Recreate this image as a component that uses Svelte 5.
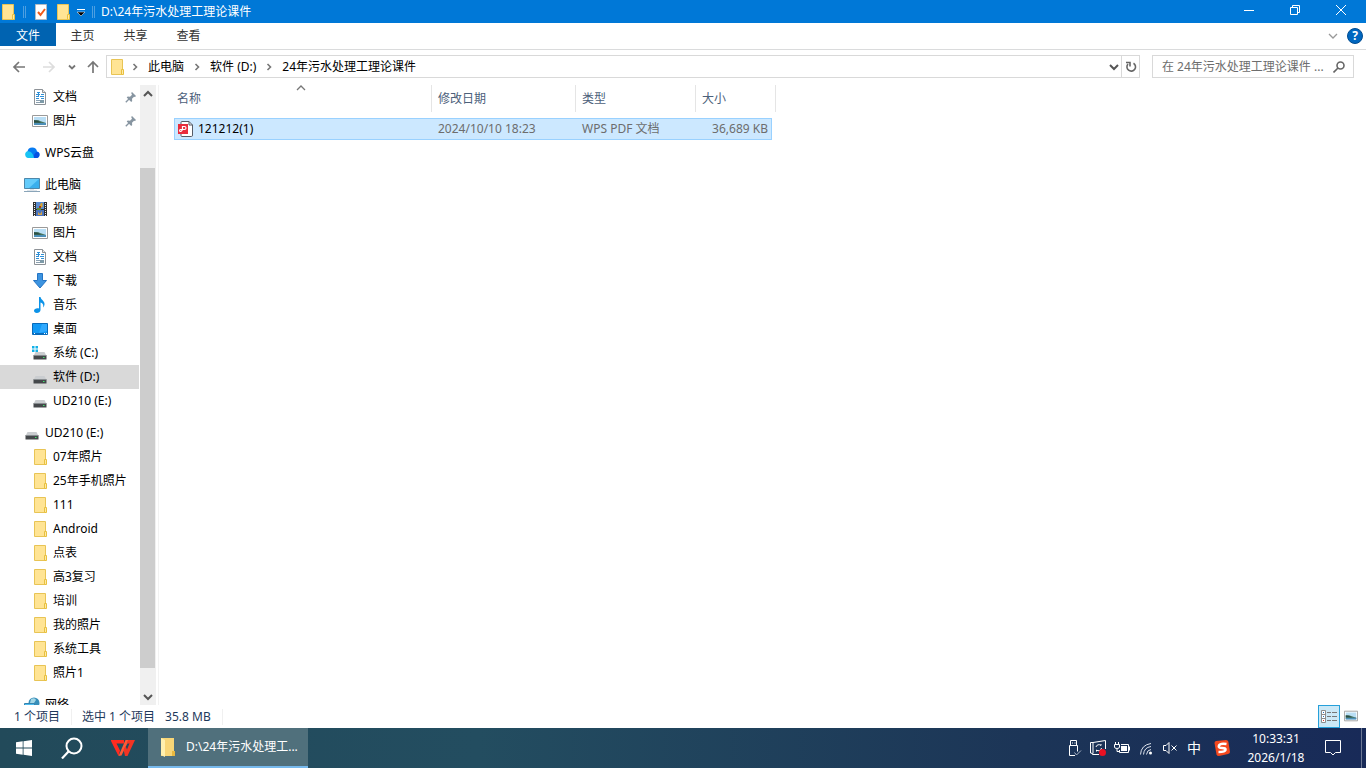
<script lang="ts">
    type NavItem = { label: string; icon: string; pinned?: boolean; selected?: boolean };
    type NavGroup = { root?: NavItem; items: NavItem[] };

    const groups: NavGroup[] = [
        {
            items: [
                { label: "文档", icon: "document", pinned: true },
                { label: "图片", icon: "picture", pinned: true }
            ]
        },
        { root: { label: "WPS云盘", icon: "cloud" }, items: [] },
        {
            root: { label: "此电脑", icon: "computer" },
            items: [
                { label: "视频", icon: "video" },
                { label: "图片", icon: "picture" },
                { label: "文档", icon: "document" },
                { label: "下载", icon: "download" },
                { label: "音乐", icon: "music" },
                { label: "桌面", icon: "desktop" },
                { label: "系统 (C:)", icon: "system" },
                { label: "软件 (D:)", icon: "drive", selected: true },
                { label: "UD210 (E:)", icon: "drive" }
            ]
        },
        {
            root: { label: "UD210 (E:)", icon: "drive" },
            items: [
                { label: "07年照片", icon: "folder" },
                { label: "25年手机照片", icon: "folder" },
                { label: "111", icon: "folder" },
                { label: "Android", icon: "folder" },
                { label: "点表", icon: "folder" },
                { label: "高3复习", icon: "folder" },
                { label: "培训", icon: "folder" },
                { label: "我的照片", icon: "folder" },
                { label: "系统工具", icon: "folder" },
                { label: "照片1", icon: "folder" }
            ]
        },
        { root: { label: "网络", icon: "network" }, items: [] }
    ];

    const crumbs = ["此电脑", "软件 (D:)", "24年污水处理工理论课件"];
    const ribbonTabs = ["主页", "共享", "查看"];

    const files = [
        { name: "121212(1)", date: "2024/10/10 18:23", type: "WPS PDF 文档", size: "36,689 KB" }
    ];

    let query = $state("");
</script>

{#snippet icon(name: string)}
    <svg class="icon" viewBox="0 0 16 16" aria-hidden="true">
        {#if name === "folder"}
            <path d="M2.5 .5h11v15h-11z" fill="#ffe494" stroke="#e8c455" />
            <path d="M12.5 10.5h2v5h-2z" fill="#ffe9a5" stroke="#e8c03f" />
        {:else if name === "document"}
            <path d="M2.5 .5h8l3 3v12h-11z" fill="#fff" stroke="#8d9297" />
            <path d="M10.5 .5v3h3" fill="#e8e8e8" stroke="#8d9297" />
            <path d="M5 3.5h3M4 5.5h4M9 5.5h3M4 7.5h3M8 7.5h4M4 9.5h3M9 9.5h3" stroke="#2f8fd6" />
            <path d="M6.500 3v4" stroke="#2f8fd6" />
            <path d="M4 11.5h4M4 13.5h4" stroke="#8ba0b0" />
            <path d="M8 11h4v3H8z" fill="#7d9aa8" />
        {:else if name === "picture"}
            <path d="M.5 2.5h15v11H.5z" fill="#fff" stroke="#9a9a9a" />
            <path d="M2 4h12v8H2z" fill="#b9def5" />
            <path d="M2 7.500q4-1 6 .5l6 2v1H2z" fill="#48745f" />
            <path d="M2 10h12v2H2z" fill="#4c8fb8" />
            <path d="M2 7l4 1 3 1.500H2z" fill="#294e45" />
        {:else if name === "cloud"}
            <path d="M4.5 13A3.700 3.700 0 0 1 3.500 6.500a4.800 4.800 0 0 1 9.500 0A3.300 3.300 0 0 1 12 13z" fill="#087bf2" />
            <path d="M4.5 13A3.500 3.500 0 0 1 3.500 6.200Q8.500 5.500 10 13z" fill="#19c4f4" />
            <path d="M10 13q-.5-5 3-6.300a3.200 3.200 0 0 1-1 6.300z" fill="#0751e2" />
        {:else if name === "computer"}
            <path d="M.5 1.5h15v10H.5z" fill="#39afed" stroke="#4d88ab" />
            <path d="M1 2h14L5 11H1z" fill="#64cbfa" />
            <path d="M6 12h4v1h3v1H3v-1h3z" fill="#dde4ea" />
            <path d="M0 14.5h16" stroke="#8aa5b9" />
        {:else if name === "video"}
            <path d="M1 1h14v14H1z" fill="#303030" />
            <path d="M4 1h8v7H4z" fill="#5a8cd0" />
            <path d="M4 9h8v6H4z" fill="#4a74bd" />
            <path d="M8 4l1-2h1.500v4l-3 1z" fill="#d9a32c" />
            <path d="M7 5h2v2H7z" fill="#a53420" />
            <path d="M5 7h4v2H5z" fill="#5d8c3a" />
            <path d="M6 11l2 2 2-3v4H6z" fill="#d1a24c" />
            <path d="M2.5 2v13M13.5 2v13" stroke="#eee" stroke-dasharray="1 1" />
        {:else if name === "download"}
            <path d="M5.5 .5h5v7h4L8 15 1.500 7.500h4z" fill="#3d94e0" stroke="#2474c4" />
        {:else if name === "music"}
            <path d="M7 0h1.500c.5 3 4.500 4 4 7.500-.2 1.600-1 2.500-1.500 3 1-3-.8-4.500-2.500-5v7.500C8.500 15 6.500 16 4.800 16 3 16 2 15 2 13.800 2 12 4.500 10.800 7 11.500z" fill="#0c93e8" />
        {:else if name === "desktop"}
            <path d="M.5 2.5h15v11H.5z" fill="#139af5" stroke="#086bbb" />
            <path d="M10 3h5v7l-8 2z" fill="#30aaff" />
            <path d="M1 12.5h14" stroke="#0a6cbc" />
            <path d="M2 12.5h1M12 12.5h1M14 12.5h1" stroke="#fff" />
        {:else if name === "system" || name === "drive"}
            {#if name === "system"}
                <path d="M0 1h2.500v2.500H0zM3.500 1H6v2.500H3.500zM0 4.500h2.500V7H0zM3.500 4.500H6V7H3.500z" fill="#13b1e8" />
            {/if}
            <path d="M3.500 7h9l2 4h-13z" fill="#cacdd0" />
            <path d="M1.500 10.500h13v4h-13z" fill="#45484b" />
            <path d="M1.500 10.500h13" stroke="#888d90" />
            <path d="M11 12.500h1.500" stroke="#3ee66b" />
        {:else if name === "network"}
            <circle cx="10" cy="6" r="5.500" fill="#378eb9" />
            <path d="M7 2q4-2 5 1l-2 3H6z" fill="#a3d6e5" />
            <path d="M.5 6.500h10v7H.5z" fill="#4dbcf0" stroke="#3483ae" />
        {:else if name === "pdf"}
            <path d="M3 1.500q0-1 1-1h7L14.500 4v10q0 1.500-1 1.500H4q-1 0-1-1z" fill="#fff" stroke="#555b66" />
            <path d="M11 .5V4h3.500" fill="none" stroke="#555b66" />
            <path d="M0 3h10v10H0z" fill="#e92c3c" />
            <path d="M4.500 8.500V5.500h2a1.300 1.300 0 0 1 0 3h-4a1 1 0 1 0 1 1.500z" fill="none" stroke="#fff" stroke-width="1.200" />
        {:else if name === "task"}
            <path d="M2.5 .5h11v15h-11z" fill="#fff" stroke="#b3bcc4" />
            <path d="M5 8l2.500 3L12 5" fill="none" stroke="#f05a1a" stroke-width="2" />
        {/if}
    </svg>
{/snippet}

{#snippet chevron(d: string, cls = "")}
    <svg class="chevron {cls}" viewBox="0 0 10 10" aria-hidden="true"><path {d} /></svg>
{/snippet}

{#snippet navRow(item: NavItem, nested: boolean)}
    <li>
        <a href="#nav" class="nav-row" class:nested class:selected={item.selected}>
            {@render icon(item.icon)}
            <span>{item.label}</span>
            {#if item.pinned}
                <svg class="pin" viewBox="0 0 12 12" aria-hidden="true">
                    <path d="M7 1l4 4-1 1-1-.3-2 2 .2 2.300-1 1L1.700 6.500l1-1L5 5.700l2-2L6.200 2z" fill="#8795a1" />
                    <path d="M4 8L.8 11.200" stroke="#8795a1" stroke-width="1.300" />
                </svg>
            {/if}
        </a>
    </li>
{/snippet}

<div class="screen">
    <header class="titlebar">
        <div class="quick">
            {@render icon("folder")}
            <i class="divider"></i>
            <button aria-label="属性">{@render icon("task")}</button>
            <button aria-label="新建文件夹">{@render icon("folder")}</button>
            <button class="customize" aria-label="自定义快速访问工具栏">
                <svg viewBox="0 0 8 8"><path d="M0 1.500h8" stroke="#fff" /><path d="M0 4h8L4 8z" fill="#000" stroke="#fff" stroke-width=".5" /></svg>
            </button>
            <i class="divider"></i>
        </div>
        <h1>D:\24年污水处理工理论课件</h1>
        <div class="window-buttons">
            <button aria-label="最小化"><svg viewBox="0 0 10 10"><path d="M0 5.500h10" /></svg></button>
            <button aria-label="向下还原"><svg viewBox="0 0 10 10"><path d="M.5 2.500h7v7h-7zM2.500 2.500v-2h7v7h-2" /></svg></button>
            <button aria-label="关闭"><svg viewBox="0 0 10 10"><path d="M0 0l10 10M10 0L0 10" /></svg></button>
        </div>
    </header>

    <nav class="ribbon">
        <button class="file-tab">文件</button>
        {#each ribbonTabs as tab}
            <button>{tab}</button>
        {/each}
        <div class="ribbon-end">
            <button aria-label="展开功能区">{@render chevron("M1 3l4 4 4-4", "light")}</button>
            <button class="help" aria-label="帮助">?</button>
        </div>
    </nav>

    <div class="addressbar">
        <div class="history">
            <button aria-label="后退"><svg viewBox="0 0 14 14"><path d="M13 7H2M7 2L2 7l5 5" /></svg></button>
            <button class="disabled" aria-label="前进"><svg viewBox="0 0 14 14"><path d="M1 7h11M7 2l5 5-5 5" /></svg></button>
            <button class="recent" aria-label="最近浏览的位置">{@render chevron("M2 3.500l3 3 3-3", "bold")}</button>
            <button class="up" aria-label="上移"><svg viewBox="0 0 14 14"><path d="M7 13V2M2 7l5-5 5 5" /></svg></button>
        </div>
        <div class="path">
            {@render icon("folder")}
            {#each crumbs as crumb}
                {@render chevron("M3.500 2l3 3-3 3", "sep")}
                <a href="#path">{crumb}</a>
            {/each}
            <button class="path-drop" aria-label="以前的位置">{@render chevron("M1 3l4 4 4-4", "strong")}</button>
            <button class="refresh" aria-label="刷新">
                <svg viewBox="0 0 12 12"><path d="M8.500 2.200A4.300 4.300 0 1 1 3 3M1 1.500h4v4" /></svg>
            </button>
        </div>
        <label class="search">
            <input type="text" aria-label="搜索" placeholder="在 24年污水处理工理论课件 ..." bind:value={query} />
            <svg viewBox="0 0 12 12" aria-hidden="true"><circle cx="7.500" cy="4.500" r="3.500" /><path d="M5 7l-4.500 4.500" /></svg>
        </label>
    </div>

    <main>
        <aside>
            <div class="tree">
                {#each groups as group}
                    <ul>
                        {#if group.root}
                            {@render navRow(group.root, false)}
                        {/if}
                        {#each group.items as item}
                            {@render navRow(item, true)}
                        {/each}
                    </ul>
                {/each}
            </div>
            <div class="scrollbar">
                <button aria-label="向上滚动">{@render chevron("M1 7l4-4 4 4", "strong")}</button>
                <div class="track"><div class="thumb"></div></div>
                <button aria-label="向下滚动">{@render chevron("M1 3l4 4 4-4", "strong")}</button>
            </div>
        </aside>

        <section class="files">
            <table>
                <colgroup>
                    <col class="col-name" />
                    <col class="col-date" />
                    <col class="col-type" />
                    <col class="col-size" />
                    <col class="col-edge" />
                </colgroup>
                <thead>
                    <tr>
                        <th class="sorted">
                            名称
                            {@render chevron("M1 7l4-4 4 4", "sort")}
                        </th>
                        <th>修改日期</th>
                        <th>类型</th>
                        <th colspan="2">大小</th>
                    </tr>
                </thead>
                <tbody>
                    {#each files as file}
                        <tr>
                            <td><div class="file-name">{@render icon("pdf")}<span>{file.name}</span></div></td>
                            <td>{file.date}</td>
                            <td>{file.type}</td>
                            <td class="size">{file.size}</td>
                            <td class="edge"></td>
                        </tr>
                    {/each}
                </tbody>
            </table>
        </section>
    </main>

    <footer class="status">
        <span class="count">1 个项目</span>
        <span class="selection"><span>选中 1 个项目</span><span>35.8 MB</span></span>
        <div class="views">
            <button class="active" aria-label="详细信息">
                <svg viewBox="0 0 16 14">
                    <path d="M.5 .5h4v12h-4zM.5 4.500h4M.5 8.500h4" fill="#fff" stroke="#8c8c8c" />
                    <path d="M2 2.500h1M2 6.500h1" stroke="#2672b8" />
                    <path d="M2 10.500h1" stroke="#d8372c" />
                    <path d="M6 2.500h4M11 2.500h5M6 6.500h4M11 6.500h5M6 10.500h4M11 10.500h5" stroke="#777" />
                </svg>
            </button>
            <button class="thumbs" aria-label="大缩略图">{@render icon("picture")}</button>
        </div>
    </footer>

    <div class="taskbar">
        <button class="launcher" aria-label="开始">
            <svg viewBox="0 0 16 16"><path d="M0 2.300L6.700 1.300v6.300H0zM7.500 1.200L16 0v7.600H7.500zM0 8.400h6.700v6.300L0 13.700zM7.500 8.400H16V16l-8.500-1.200z" fill="#fff" /></svg>
        </button>
        <button class="launcher" aria-label="搜索">
            <svg class="large" viewBox="0 0 22 22"><circle cx="13" cy="9" r="7.500" fill="none" stroke="#fff" stroke-width="2" /><path d="M7.500 14.500l-6.500 7" stroke="#fff" stroke-width="2.200" /></svg>
        </button>
        <button class="launcher wps" aria-label="WPS Office">
            <svg class="large" viewBox="0 0 24 16">
                <path d="M0 0h13v3.500H5.500L9 10.500 7.500 16 0 1z" fill="#ff2b20" />
                <path d="M7.500 16L14.500 0H18L10.500 15.500z" fill="#ff5a36" />
                <path d="M12.500 9.500l2-3.500 1.500 3.500L18.500 3.500h-3L17 0h7l-7.500 16H14z" fill="#f33423" />
            </svg>
        </button>
        <button class="task">
            <svg viewBox="0 0 16 20"><path d="M1 1h13v13h1v5H1z" fill="#f8d677" /><path d="M1 1l4 2v17l-4-2z" fill="#fff0ae" /><path d="M12 14h3v5h-3z" fill="#e8b83f" /></svg>
            <span>D:\24年污水处理工...</span>
        </button>

        <div class="tray">
            <button aria-label="安全删除硬件">
                <svg viewBox="0 0 16 16"><path d="M4.500 5.500v-5h6v5M3.500 5.500h8v6M3.500 5.500v10H9M6 3h1M8.500 3h1" /><path d="M8.500 12.500l2 2.500 4.500-4.500" stroke="#a9b5c8" /></svg>
            </button>
            <button aria-label="更新">
                <svg viewBox="0 0 16 16"><path d="M9 14.500H2.500v-1l-2-.5V2.500H3l12.500-2V9M3 2.500v11M6 7a3 3 0 0 1 5-1.500V4M11.500 8a3 3 0 0 1-5 2v1.500" /><circle cx="12.500" cy="12.500" r="3.500" fill="#e81123" stroke="none" /></svg>
            </button>
            <button aria-label="电池">
                <svg viewBox="0 0 16 16"><path d="M1.500 2v3M4.500 2v3M.5 4.500h5v2.500q0 1.500-2.500 1.500T.5 7zM3 9v2.500h3" /><path d="M7 4.500h7.500v8h-9V10M15.500 6.500v4" /><path d="M7 6h6v5H7z" fill="#fff" stroke="none" /></svg>
            </button>
            <button aria-label="网络">
                <svg viewBox="0 0 16 16"><path d="M2.500 14.500Q3 5 13 3.500M5.500 14.500Q6 7.500 13 6.500M8.500 14.500q.5-4.500 4.500-5" stroke="#dce2ec" /><circle cx="12.500" cy="13" r="1.500" fill="#fff" stroke="none" /></svg>
            </button>
            <button aria-label="音量">
                <svg viewBox="0 0 16 16"><path d="M1.500 5.500H4l3-3v11l-3-3H1.500zM9.500 5.500l5 5M14.500 5.500l-5 5" /></svg>
            </button>
            <button class="ime">中</button>
            <button class="sogou" aria-label="搜狗输入法">
                <svg viewBox="0 0 16 16"><path d="M.5 3q0-1.500 1.500-2L12 0q2 0 2.300 1.500L16 12q0 1.500-2 2L5 16q-2 0-2.500-1.500z" fill="#f4481e" stroke="none" /><path d="M12.500 4Q6 3 5 5.500T8 8t3.500 2T4.500 12" stroke="#fff" stroke-width="2.600" /></svg>
            </button>
            <button class="clock"><time>10:33:31</time><span>2026/1/18</span></button>
            <button class="notify" aria-label="操作中心">
                <svg viewBox="0 0 16 16"><path d="M.5 .5h15v12h-5L8 15l-2.500-2.500h-5z" /></svg>
            </button>
            <i class="show-desktop"></i>
        </div>
    </div>
</div>

<style>
    :global(body) {
        margin: 0;
    }

    .screen {
        display: flex;
        flex-direction: column;
        height: 100vh;
        background: #fff;
        color: #000;
        font: 12px/16px "Noto Sans", "Noto Sans CJK SC", sans-serif;
    }

    .screen :global(*) {
        box-sizing: border-box;
    }

    button {
        display: flex;
        align-items: center;
        justify-content: center;
        padding: 0;
        border: 0;
        background: none;
        color: inherit;
        font: inherit;
    }

    a {
        color: inherit;
        text-decoration: none;
    }

    svg {
        display: block;
        flex: none;
        fill: none;
    }

    .icon {
        width: 16px;
        height: 16px;
    }

    .chevron {
        width: 10px;
        height: 10px;
        stroke: #777;
        stroke-width: 1.3;
    }

    .chevron.light {
        stroke: #999;
    }

    .chevron.bold {
        stroke-width: 1.8;
    }

    .chevron.strong {
        stroke: #555;
        stroke-width: 2;
    }

    /* title bar */
    .titlebar {
        display: flex;
        align-items: center;
        flex: none;
        height: 23px;
        background: #0078d7;
        color: #fff;
    }

    .quick {
        display: flex;
        align-items: center;
        gap: 6px;
        width: 101px;
    }

    .quick .customize {
        width: 8px;
    }

    .customize svg {
        width: 8px;
        height: 8px;
    }

    .divider {
        width: 3px;
        height: 12px;
        margin: 0 1px;
        border: solid #4d9fe1;
        border-width: 0 1px;
    }

    h1 {
        flex: 1;
        margin: 0;
        font: inherit;
    }

    .window-buttons {
        display: flex;
        align-items: flex-start;
        height: 100%;
        padding-right: 2px;
    }

    .window-buttons button {
        width: 46px;
        height: 20px;
    }

    .window-buttons svg {
        width: 10px;
        height: 10px;
        stroke: #fff;
    }

    /* ribbon tabs */
    .ribbon {
        display: flex;
        flex: none;
        height: 27px;
        border-bottom: 1px solid #dadbdc;
        color: #333;
    }

    .ribbon > button {
        width: 53px;
        height: 25px;
    }

    .ribbon > .file-tab {
        width: 56px;
        height: 23px;
        padding-top: 2px;
        background: #0063b1;
        color: #fff;
    }

    .ribbon-end {
        display: flex;
        align-items: center;
        gap: 9px;
        margin-left: auto;
        padding-right: 3px;
    }

    .help {
        width: 16px;
        height: 16px;
        border: 1px solid #004c91;
        border-radius: 50%;
        background: #0067c0;
        font-weight: 700;
        color: #fff;
    }

    /* address bar */
    .addressbar {
        display: flex;
        flex: none;
        padding: 5px 12px 7px;
    }

    .history {
        display: flex;
        align-items: center;
        width: 94px;
    }

    .history button {
        width: 14px;
        margin-right: 16px;
    }

    .history svg:not(.chevron) {
        width: 14px;
        height: 14px;
        stroke: #777;
        stroke-width: 1.7;
    }

    .history .disabled {
        margin-right: 11px;
    }

    .history .disabled svg {
        stroke: #ddd;
    }

    .history .recent {
        width: 10px;
        margin-right: 9px;
    }

    .history .up {
        margin-right: 0;
    }

    .path {
        display: flex;
        align-items: center;
        flex: 1;
        height: 23px;
        padding-left: 2px;
        border: 1px solid #d9d9d9;
    }

    .path > .icon {
        margin-right: -3px;
    }

    .chevron.sep {
        margin: 0 8px;
        stroke-width: 1.6;
    }

    .path-drop {
        width: 15px;
        height: 21px;
        margin-left: auto;
    }

    .refresh {
        width: 18px;
        height: 21px;
        border-left: 1px solid #d9d9d9;
    }

    .refresh svg {
        width: 12px;
        height: 12px;
        stroke: #666;
        stroke-width: 1.6;
    }

    .search {
        display: flex;
        align-items: center;
        width: 202px;
        height: 23px;
        margin-left: 12px;
        padding: 0 8px 0 9px;
        border: 1px solid #d9d9d9;
    }

    .search input {
        flex: 1;
        min-width: 0;
        padding: 0;
        border: 0;
        outline: 0;
        font: inherit;
    }

    .search input::placeholder {
        color: #6d6d6d;
        opacity: 1;
    }

    .search svg {
        width: 12px;
        height: 12px;
        stroke: #666;
        stroke-width: 1.6;
    }

    /* navigation pane */
    main {
        display: flex;
        flex: 1;
        min-height: 0;
    }

    aside {
        display: flex;
        width: 159px;
        padding-right: 2px;
        border-right: 1px solid #f2f2f2;
    }

    .tree {
        flex: 1;
        overflow: hidden;
    }

    ul {
        margin: 0 0 8px;
        padding: 0;
        list-style: none;
    }

    .nav-row {
        display: flex;
        align-items: center;
        gap: 5px;
        height: 24px;
        margin-right: 1px;
        padding: 0 2px 0 24px;
        white-space: nowrap;
    }

    .nav-row.nested {
        padding-left: 32px;
    }

    .nav-row.selected {
        background: #d9d9d9;
    }

    .pin {
        width: 12px;
        height: 12px;
        margin-left: auto;
    }

    .scrollbar {
        display: flex;
        flex-direction: column;
        width: 16px;
        padding-right: 1px;
        background: #f0f0f0;
    }

    .scrollbar button {
        flex: none;
        height: 17px;
    }

    .track {
        display: flex;
        flex: 1;
        padding: 66px 0 20px;
    }

    .thumb {
        flex: 1;
        background: #cdcdcd;
    }

    /* file list */
    .files {
        flex: 1;
        padding-left: 15px;
    }

    table {
        table-layout: fixed;
        width: 602px;
        border-spacing: 0;
    }

    .col-name {
        width: 258px;
    }

    .col-date {
        width: 144px;
    }

    .col-type {
        width: 120px;
    }

    .col-size {
        width: 76px;
    }

    .col-edge {
        width: 4px;
    }

    th {
        height: 27px;
        padding: 0 6px;
        border-right: 1px solid #e5e5e5;
        color: #4c607a;
        font-weight: 400;
        text-align: left;
    }

    th.sorted {
        position: relative;
        padding-left: 3px;
    }

    .chevron.sort {
        position: absolute;
        top: -2px;
        left: 122px;
    }

    tbody::before {
        content: "";
        display: block;
        height: 6px;
    }

    td {
        height: 22px;
        padding: 0 6px;
        border: solid #99d1ff;
        border-width: 1px 0;
        background: #cce8ff;
        color: #6d6d6d;
    }

    td:first-child {
        padding-left: 3px;
        border-left-width: 1px;
        color: #000;
    }

    td.size {
        padding: 0 3px 0 0;
        border-right-width: 1px;
        text-align: right;
    }

    td.edge {
        padding: 0;
        border: 0;
        background: none;
    }

    .file-name {
        display: flex;
        align-items: center;
        gap: 4px;
    }

    /* status bar */
    .status {
        display: flex;
        align-items: center;
        flex: none;
        height: 23px;
        padding-left: 14px;
        color: #1e395b;
    }

    .count,
    .selection {
        padding-right: 11px;
        border-right: 1px solid #f0f0f0;
    }

    .selection {
        display: flex;
        gap: 10px;
        padding-left: 10px;
    }

    .views {
        display: flex;
        gap: 4px;
        margin-left: auto;
        padding-right: 8px;
    }

    .views button {
        height: 23px;
    }

    .views .active {
        width: 22px;
        border: 1px solid #26a0da;
        background: #cbe8f6;
    }

    .views .active svg {
        width: 16px;
        height: 14px;
    }

    .views .thumbs {
        height: 21px;
    }

    .views .thumbs .icon {
        width: 14px;
        height: 14px;
    }

    /* taskbar */
    .taskbar {
        display: flex;
        flex: none;
        height: 40px;
        background: linear-gradient(90deg, #224a5a, #234d60 35%, #1c3557 75%, #182a58);
        color: #fff;
    }

    .launcher {
        width: 48px;
    }

    .launcher svg {
        width: 16px;
        height: 16px;
    }

    .launcher svg.large {
        width: 22px;
        height: 22px;
    }

    .launcher.wps {
        width: 52px;
        padding-left: 2px;
    }

    .launcher.wps svg {
        width: 24px;
        height: 16px;
    }

    .task {
        justify-content: flex-start;
        gap: 10px;
        width: 160px;
        padding-left: 12px;
        border-bottom: 2px solid #76b9ed;
        background: #50707c;
    }

    .task svg {
        width: 16px;
        height: 20px;
    }

    .tray {
        display: flex;
        margin-left: auto;
    }

    .tray button {
        width: 24px;
    }

    .tray svg {
        width: 16px;
        height: 16px;
        stroke: #fff;
    }

    .tray .ime {
        font-size: 14px;
    }

    .tray .sogou {
        width: 32px;
    }

    .tray .clock {
        flex-direction: column;
        gap: 3px;
        width: 76px;
    }

    .tray .notify {
        width: 38px;
    }

    .show-desktop {
        width: 5px;
        margin-left: 9px;
        border-left: 1px solid #6c7894;
    }
</style>
